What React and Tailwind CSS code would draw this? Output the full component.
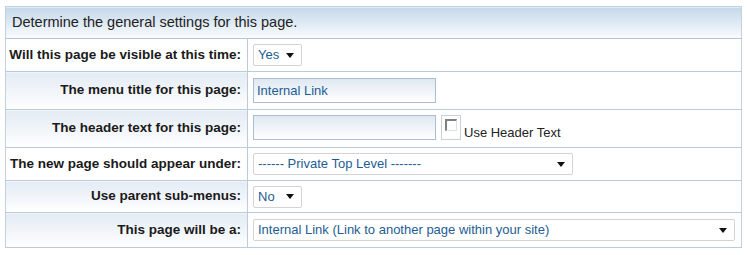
import React from "react";

const Arrow = () => (
  <svg width="8" height="5" viewBox="0 0 8 5" className="shrink-0">
    <path d="M0 0h8L4 5z" fill="#111" />
  </svg>
);

const Select = ({ value, width }) => (
  <div
    className="flex items-center justify-between h-[22px] border border-[#d3d3d3] rounded-[2px] bg-white pl-[4px] pr-[7px] text-[13px] text-[#1d5d94]"
    style={{ width }}
  >
    <span>{value}</span>
    <Arrow />
  </div>
);

const TextBox = ({ value }) => (
  <div className="w-[183px] h-[25px] border border-[#a9bfd3] bg-gradient-to-b from-[#dfe8f1] to-white pl-[3px] flex items-center text-[13px] text-[#1d5d94]">
    {value}
  </div>
);

const rows = [
  { label: "Will this page be visible at this time:", h: "h-[33px]", shade: false, field: <Select value="Yes" width={49} /> },
  { label: "The menu title for this page:", h: "h-[38px]", shade: true, field: <TextBox value="Internal Link" /> },
  {
    label: "The header text for this page:",
    h: "h-[38px]",
    shade: true,
    field: (
      <div className="flex items-start">
        <TextBox value="" />
        <div className="ml-[5px] w-[20px] h-[25px] border border-[#c5d2de] bg-white pl-[3px] pt-[3px]">
          <div className="w-[12px] h-[12px] border-t-[2px] border-l-[2px] border-r border-b border-t-[#808080] border-l-[#808080] border-r-[#e0e0e0] border-b-[#e0e0e0] bg-white" />
        </div>
        <span className="ml-[3px] mt-[8px] text-[13px] text-[#222]">Use Header Text</span>
      </div>
    ),
  },
  { label: "The new page should appear under:", h: "h-[33px]", shade: false, field: <Select value="------ Private Top Level -------" width={320} /> },
  { label: "Use parent sub-menus:", h: "h-[32px]", shade: true, field: <Select value="No" width={49} /> },
  { label: "This page will be a:", h: "h-[35px]", shade: true, field: <Select value="Internal Link (Link to another page within your site)" width={482} /> },
];

export default function App() {
  return (
    <div className="w-[747px] h-[255px] bg-white pt-[6px] pl-[5px] font-['Liberation_Sans',Arial,sans-serif]">
      <table className="w-[737px] border-collapse border border-[#c3d1df]">
        <tbody>
          <tr className="h-[32px]">
            <td colSpan={2} className="bg-gradient-to-b from-[#c4d8ea] to-[#fafcfe] pl-[6px] text-[14.5px] text-[#222] border-b border-[#b9c6d2]">
              Determine the general settings for this page.
            </td>
          </tr>
          {rows.map((r) => (
            <tr key={r.label} className={r.h}>
              <td
                className={`w-[242px] pr-[6px] text-right text-[13.5px] font-bold text-[#1a1a1a] border-b border-r border-[#bccbd9] ${
                  r.shade ? "bg-gradient-to-b from-[#e3ebf4] to-white" : "bg-white"
                }`}
              >
                {r.label}
              </td>
              <td className="pl-[5px] border-b border-[#bccbd9] bg-white">{r.field}</td>
            </tr>
          ))}
        </tbody>
      </table>
    </div>
  );
}
